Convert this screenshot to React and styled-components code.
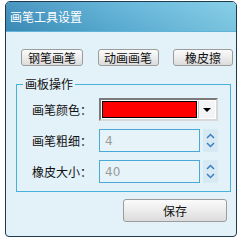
import React from 'react'
import styled, { createGlobalStyle } from 'styled-components'

const Global = createGlobalStyle`
  html, body { margin: 0; padding: 0; background: #ffffff; }
  body { font-family: "Noto Sans CJK SC", "Noto Sans", sans-serif; }
`

const Window = styled.div`
  margin: 1px 0 0 5px;
  width: 232px;
  height: 236px;
  box-sizing: border-box;
  border: 1px solid #1d3b4c;
  border-radius: 5px 5px 4px 4px;
  background: #e3f2f9;
  overflow: hidden;
  display: flex;
  flex-direction: column;
`

const TitleBar = styled.div`
  height: 29px;
  flex: none;
  display: flex;
  align-items: center;
  padding-left: 4px;
  background:
    linear-gradient(to bottom, rgba(255,255,255,0.08), rgba(0,0,0,0.04)),
    linear-gradient(to right, #3c8ebc 0%, #5aafd6 45%, #7ecbe7 100%);
  border-bottom: 1px solid #5fb4d8;
  color: #ffffff;
  font-size: 12px;
`

const Content = styled.div`
  padding: 17px 3px 0 15px;
  display: flex;
  flex-direction: column;
`

const ToolRow = styled.div`
  display: flex;
  justify-content: space-between;
`

const Button = styled.button`
  width: ${p => p.$w}px;
  height: ${p => p.$h || 17}px;
  padding: 0;
  border: 1px solid #9c9c9c;
  border-radius: 3px;
  background: linear-gradient(to bottom, #fbfbfb 0%, #ececec 50%, #dcdcdc 100%);
  color: #111;
  font-family: "Noto Sans CJK SC", sans-serif;
  font-size: 12px;
  line-height: 1;
  display: flex;
  align-items: center;
  justify-content: center;
`

const Group = styled.fieldset`
  margin: 10px 2px 0 -5px;
  padding: 6px 0 8px 15px;
  border: 1px solid #45b1dc;
  border-radius: 0;
  display: flex;
  flex-direction: column;
  gap: 8px;
`

const Legend = styled.legend`
  margin-left: -9px;
  padding: 0 2px;
  font-size: 12px;
  line-height: 16px;
  color: #111;
`

const Row = styled.div`
  height: 23px;
  display: flex;
  align-items: center;
`

const Label = styled.div`
  width: 67px;
  font-size: 12px;
  color: #111;
`

const Select = styled.div`
  width: 119px;
  height: 23px;
  box-sizing: border-box;
  border: 2px solid;
  border-color: #7a7a7a #d8d8d8 #d8d8d8 #7a7a7a;
  background: #ffffff;
  display: flex;
  align-items: stretch;
  padding: 1px;
`

const Swatch = styled.div`
  flex: 1;
  background: #ff0000;
  border: 1px solid #000;
`

const DropButton = styled.div`
  width: 16px;
  margin-left: 1px;
  background: #f2f4f5;
  border-left: 1px solid #c8c8c8;
  display: flex;
  align-items: center;
  justify-content: center;
`

const Arrow = styled.div`
  width: 0;
  height: 0;
  border-left: 4px solid transparent;
  border-right: 4px solid transparent;
  border-top: 4px solid #000;
`

const Input = styled.div`
  width: 101px;
  height: 23px;
  box-sizing: border-box;
  border: 1px solid #4aa7d7;
  background: #e6f3f9;
  color: #9a9a9a;
  font-family: "DejaVu Sans", sans-serif;
  font-size: 12px;
  display: flex;
  align-items: center;
  padding-left: 5px;
`

const Spinner = styled.div`
  width: 15px;
  height: 23px;
  margin-left: 3px;
  background: #d7eaf3;
  display: flex;
  flex-direction: column;
  align-items: center;
  justify-content: space-around;
  padding: 2px 0;
  box-sizing: border-box;
`

const Footer = styled.div`
  display: flex;
  justify-content: flex-end;
  padding: 7px 6px 0 0;
`

const Chevron = ({ up }) => (
  <svg width="9" height="6" viewBox="0 0 9 6">
    <path d={up ? 'M1 5 L4.5 1.5 L8 5' : 'M1 1 L4.5 4.5 L8 1'} fill="none" stroke="#3a7fc4" strokeWidth="1.5" />
  </svg>
)

const NumberField = ({ value }) => (
  <>
    <Input>{value}</Input>
    <Spinner>
      <Chevron up />
      <Chevron />
    </Spinner>
  </>
)

export default function App() {
  return (
    <>
      <Global />
      <Window>
        <TitleBar>画笔工具设置</TitleBar>
        <Content>
          <ToolRow>
            <Button $w={62}>钢笔画笔</Button>
            <Button $w={61}>动画画笔</Button>
            <Button $w={60}>橡皮擦</Button>
          </ToolRow>
          <Group>
            <Legend>画板操作</Legend>
            <Row>
              <Label>画笔颜色：</Label>
              <Select>
                <Swatch />
                <DropButton><Arrow /></DropButton>
              </Select>
            </Row>
            <Row>
              <Label>画笔粗细：</Label>
              <NumberField value="4" />
            </Row>
            <Row>
              <Label>橡皮大小：</Label>
              <NumberField value="40" />
            </Row>
          </Group>
          <Footer>
            <Button $w={104} $h={23}>保存</Button>
          </Footer>
        </Content>
      </Window>
    </>
  )
}
